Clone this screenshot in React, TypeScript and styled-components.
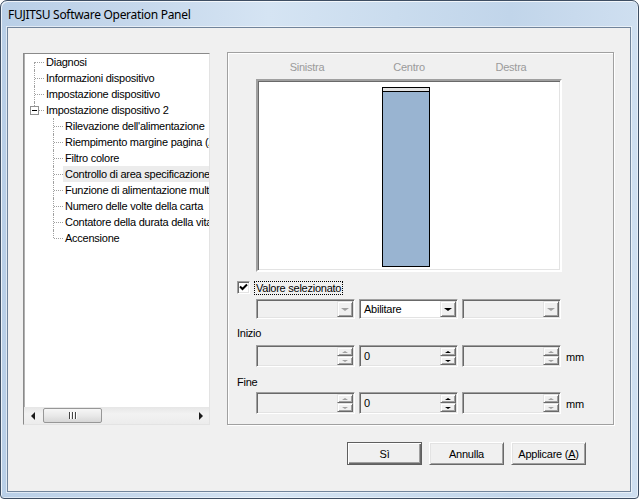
import React from 'react';
import styled, { createGlobalStyle } from 'styled-components';

const Global = createGlobalStyle`
  html, body { margin: 0; padding: 0; background: #ffffff; }
  body { font-family: "Liberation Sans", Arial, sans-serif; }
  * { box-sizing: border-box; }
`;

const UI_FONT = `"Liberation Sans", Arial, sans-serif`;

const Window = styled.div`
  width: 639px;
  height: 499px;
  display: flex;
  flex-direction: column;
  padding: 0 7px 6px 6px;
  border: 1px solid #3e4e63;
  border-radius: 7px 7px 4px 4px;
  background: linear-gradient(to right, #b9cfe7 0%, #c6d8ec 22%, #d5e4f3 42%, #cadcee 62%, #c1d5ea 80%, #cfdff0 100%);
  box-shadow: inset 1px 1px 0 rgba(255, 255, 255, 0.75), inset -1px -1px 0 rgba(255, 255, 255, 0.5);
  overflow: hidden;
`;

const TitleBar = styled.div`
  height: 26px;
  display: flex;
  align-items: center;
  padding-left: 1px;
  font-family: "Noto Sans", "Open Sans", sans-serif;
  font-size: 12px;
  letter-spacing: -0.3px;
  color: #000;
`;

const Client = styled.div`
  flex: 1;
  display: flex;
  flex-direction: column;
  padding: 24px 0 0 15px;
  background: #f0f0f0;
  border: 1px solid #71849b;
  box-shadow: 0 0 0 1px rgba(255, 255, 255, 0.55);
  font-family: ${UI_FONT};
  font-size: 11px;
  letter-spacing: -0.25px;
  color: #000;
`;

const MainRow = styled.div`
  display: flex;
  align-items: flex-start;
  gap: 17px;
`;

/* ---------- Tree ---------- */

const Tree = styled.div`
  width: 187px;
  height: 372px;
  margin-top: 1px;
  display: flex;
  flex-direction: column;
  background: #fff;
  border: 1px solid;
  border-color: #8a8a8a #e3e3e3 #e3e3e3 #8a8a8a;
  box-shadow: inset 1px 0 0 #b0b0b0;
`;

const TreeList = styled.div`
  flex: 1;
  overflow: hidden;
`;

const TreeRow = styled.div<{ $level: number; $first?: boolean; $last?: boolean }>`
  position: relative;
  height: 16px;
  display: flex;
  align-items: center;
  padding-left: ${(p) => (p.$level === 0 ? 20 : 39)}px;
  white-space: nowrap;

  &::before {
    content: '';
    position: absolute;
    left: ${(p) => (p.$level === 0 ? 10 : 29)}px;
    top: ${(p) => (p.$first ? 8 : 0)}px;
    bottom: ${(p) => (p.$last ? 8 : 0)}px;
    border-left: 1px dotted #a0a0a0;
  }

  &::after {
    content: '';
    position: absolute;
    left: ${(p) => (p.$level === 0 ? 11 : 30)}px;
    width: 9px;
    top: 8px;
    border-top: 1px dotted #a0a0a0;
  }
`;

const TreeLabel = styled.span<{ $selected?: boolean }>`
  display: block;
  flex: 1;
  height: 16px;
  line-height: 16px;
  padding-left: 2px;
  background: ${(p) => (p.$selected ? '#ececec' : 'transparent')};
`;

const Expander = styled.span`
  position: absolute;
  left: 6px;
  top: 4px;
  width: 9px;
  height: 9px;
  border: 1px solid #919191;
  background: #fff;
  z-index: 1;

  &::after {
    content: '';
    position: absolute;
    left: 1px;
    top: 3px;
    width: 5px;
    height: 1px;
    background: #000;
  }
`;

const HScroll = styled.div`
  height: 17px;
  display: flex;
  align-items: center;
  background: linear-gradient(#e6e6e6, #f2f2f2 40%, #ececec);
`;

const ScrollArrow = styled.div<{ $dir: 'left' | 'right' }>`
  width: 17px;
  height: 17px;
  display: flex;
  align-items: center;
  justify-content: center;

  &::after {
    content: '';
    width: 0;
    height: 0;
    border-top: 4px solid transparent;
    border-bottom: 4px solid transparent;
    ${(p) => (p.$dir === 'left' ? 'border-right: 4px solid #1a1a1a;' : 'border-left: 4px solid #1a1a1a;')}
  }
`;

const Thumb = styled.div`
  width: 59px;
  height: 15px;
  margin-left: 2px;
  border: 1px solid #979797;
  border-radius: 2px;
  background: linear-gradient(#f6f6f6, #e9e9e9 50%, #d7d7d7);
  display: flex;
  align-items: center;
  justify-content: center;
`;

const Grip = styled.span`
  width: 8px;
  height: 7px;
  background: repeating-linear-gradient(to right, #444 0 1px, #fff 1px 2px, transparent 2px 3px);
`;

const ScrollSpacer = styled.div`
  flex: 1;
`;

/* ---------- Group box ---------- */

const GroupBox = styled.div`
  width: 387px;
  height: 373px;
  display: flex;
  flex-direction: column;
  padding-left: 9px;
  border: 1px solid #a0a0a0;
  box-shadow: inset 1px 1px 0 #fff, 1px 1px 0 #fff;
`;

const Indented = styled.div`
  margin-left: 19px;
`;

const Headers = styled(Indented)`
  width: 306px;
  height: 26px;
  padding-top: 8px;
  display: grid;
  grid-template-columns: repeat(3, 1fr);
  color: #9b9b9b;
  line-height: 13px;
  text-align: center;
`;

const Canvas = styled(Indented)`
  width: 306px;
  height: 193px;
  background: #fff;
  border: 2px solid;
  border-color: #a0a0a0 #fff #fff #a0a0a0;
  box-shadow: inset 1px 1px 0 #696969, inset -1px -1px 0 #e3e3e3;
  padding: 6px 0 0 124px;
`;

const Bar = styled.div`
  width: 48px;
  height: 180px;
  border: 1px solid #000;
  display: flex;
  flex-direction: column;
`;

const BarCap = styled.div`
  height: 4px;
  background: #e3e3e3;
  border-bottom: 1px solid #000;
`;

const BarFill = styled.div`
  flex: 1;
  background: #99b4d1;
`;

const CheckRow = styled.div`
  margin-top: 9px;
  height: 13px;
  display: flex;
  align-items: center;
  gap: 4px;
`;

const CheckBox = styled.span`
  width: 13px;
  height: 13px;
  display: flex;
  align-items: center;
  justify-content: center;
  background: #fff;
  border: 1px solid;
  border-color: #a0a0a0 #fff #fff #a0a0a0;
  box-shadow: inset 1px 1px 0 #696969, inset -1px -1px 0 #e3e3e3;
`;

const FocusLabel = styled.span`
  line-height: 12px;
  padding: 0 1px;
  border: 1px dotted #000;
`;

const ControlRow = styled(Indented)<{ $top: number }>`
  margin-top: ${(p) => p.$top}px;
  display: flex;
  align-items: center;
  gap: 4px;
`;

const Sunken = styled.div<{ $white?: boolean; $h: number }>`
  width: 99px;
  height: ${(p) => p.$h}px;
  display: flex;
  align-items: stretch;
  padding: 1px;
  background: ${(p) => (p.$white ? '#fff' : '#f0f0f0')};
  border: 1px solid;
  border-color: #a0a0a0 #fff #fff #a0a0a0;
  box-shadow: inset 1px 1px 0 #696969, inset -1px -1px 0 #e3e3e3;
`;

const FieldText = styled.span`
  flex: 1;
  display: flex;
  align-items: center;
  padding-left: 3px;
`;

const Raised = styled.span`
  width: 16px;
  display: flex;
  align-items: center;
  justify-content: center;
  background: #f0f0f0;
  border: 1px solid;
  border-color: #e3e3e3 #696969 #696969 #e3e3e3;
  box-shadow: inset 1px 1px 0 #fff, inset -1px -1px 0 #a0a0a0;
`;

const SpinStack = styled.span`
  width: 16px;
  display: flex;
  flex-direction: column;
`;

const SpinBtn = styled(Raised)`
  flex: 1;
  width: 16px;
`;

const Arrow = styled.span<{ $up?: boolean; $on?: boolean; $size: number }>`
  width: 0;
  height: 0;
  border-left: ${(p) => p.$size}px solid transparent;
  border-right: ${(p) => p.$size}px solid transparent;
  ${(p) =>
    p.$up
      ? `border-bottom: ${p.$size - 1}px solid ${p.$on ? '#000' : '#a0a0a0'};`
      : `border-top: ${p.$size - 1}px solid ${p.$on ? '#000' : '#a0a0a0'};`}
`;

const FieldLabel = styled.div<{ $top: number }>`
  margin-top: ${(p) => p.$top}px;
  height: 13px;
  line-height: 13px;
`;

const Unit = styled.span`
  margin-left: 1px;
  padding-top: 2px;
`;

/* ---------- Buttons ---------- */

const ButtonRow = styled.div`
  margin-top: 17px;
  padding-right: 44px;
  display: flex;
  justify-content: flex-end;
  gap: 7px;
`;

const Button = styled.button<{ $default?: boolean }>`
  width: 75px;
  height: 23px;
  padding: 0;
  font: inherit;
  letter-spacing: inherit;
  color: #000;
  background: #f0f0f0;
  border: 1px solid;
  border-color: ${(p) => (p.$default ? '#5f5f5f' : '#fff #696969 #696969 #fff')};
  box-shadow: ${(p) =>
    p.$default
      ? 'inset 1px 1px 0 #fff, inset -1px -1px 0 #696969, inset -2px -2px 0 #a0a0a0'
      : 'inset 1px 1px 0 #e3e3e3, inset -1px -1px 0 #a0a0a0'};
`;

const Underlined = styled.span`
  text-decoration: underline;
`;

const treeItems: { label: string; level: number; first?: boolean; last?: boolean; expander?: boolean; selected?: boolean }[] = [
  { label: 'Diagnosi', level: 0, first: true },
  { label: 'Informazioni dispositivo', level: 0 },
  { label: 'Impostazione dispositivo', level: 0 },
  { label: 'Impostazione dispositivo 2', level: 0, last: true, expander: true },
  { label: "Rilevazione dell'alimentazione", level: 1 },
  { label: 'Riempimento margine pagina (ADF)', level: 1 },
  { label: 'Filtro colore', level: 1 },
  { label: 'Controllo di area specificazione', level: 1, selected: true },
  { label: 'Funzione di alimentazione multipla', level: 1 },
  { label: 'Numero delle volte della carta', level: 1 },
  { label: 'Contatore della durata della vita', level: 1 },
  { label: 'Accensione', level: 1, last: true },
];

const Check = () => (
  <svg width="9" height="9" viewBox="0 0 9 9">
    <polyline points="1,3.5 3.5,6 8,1.5" fill="none" stroke="#000" strokeWidth="2" />
  </svg>
);

const Combo = ({ text, on }: { text?: string; on?: boolean }) => (
  <Sunken $white={on} $h={20}>
    <FieldText>{text}</FieldText>
    <Raised>
      <Arrow $on={on} $size={4} />
    </Raised>
  </Sunken>
);

const Spin = ({ value, on }: { value?: string; on?: boolean }) => (
  <Sunken $h={22}>
    <FieldText>{value}</FieldText>
    <SpinStack>
      <SpinBtn>
        <Arrow $up $on={on} $size={3} />
      </SpinBtn>
      <SpinBtn>
        <Arrow $on={on} $size={3} />
      </SpinBtn>
    </SpinStack>
  </Sunken>
);

export default function App() {
  return (
    <>
      <Global />
      <Window>
        <TitleBar>FUJITSU Software Operation Panel</TitleBar>
        <Client>
          <MainRow>
            <Tree>
              <TreeList>
                {treeItems.map((it) => (
                  <TreeRow key={it.label} $level={it.level} $first={it.first} $last={it.last}>
                    {it.expander && <Expander />}
                    <TreeLabel $selected={it.selected}>{it.label}</TreeLabel>
                  </TreeRow>
                ))}
              </TreeList>
              <HScroll>
                <ScrollArrow $dir="left" />
                <Thumb>
                  <Grip />
                </Thumb>
                <ScrollSpacer />
                <ScrollArrow $dir="right" />
              </HScroll>
            </Tree>
            <GroupBox>
              <Headers>
                <span>Sinistra</span>
                <span>Centro</span>
                <span>Destra</span>
              </Headers>
              <Canvas>
                <Bar>
                  <BarCap />
                  <BarFill />
                </Bar>
              </Canvas>
              <CheckRow>
                <CheckBox>
                  <Check />
                </CheckBox>
                <FocusLabel>Valore selezionato</FocusLabel>
              </CheckRow>
              <ControlRow $top={5}>
                <Combo />
                <Combo text="Abilitare" on />
                <Combo />
              </ControlRow>
              <FieldLabel $top={8}>Inizio</FieldLabel>
              <ControlRow $top={5}>
                <Spin />
                <Spin value="0" on />
                <Spin />
                <Unit>mm</Unit>
              </ControlRow>
              <FieldLabel $top={9}>Fine</FieldLabel>
              <ControlRow $top={3}>
                <Spin />
                <Spin value="0" on />
                <Spin />
                <Unit>mm</Unit>
              </ControlRow>
            </GroupBox>
          </MainRow>
          <ButtonRow>
            <Button $default>Sì</Button>
            <Button>Annulla</Button>
            <Button>
              Applicare (<Underlined>A</Underlined>)
            </Button>
          </ButtonRow>
        </Client>
      </Window>
    </>
  );
}
